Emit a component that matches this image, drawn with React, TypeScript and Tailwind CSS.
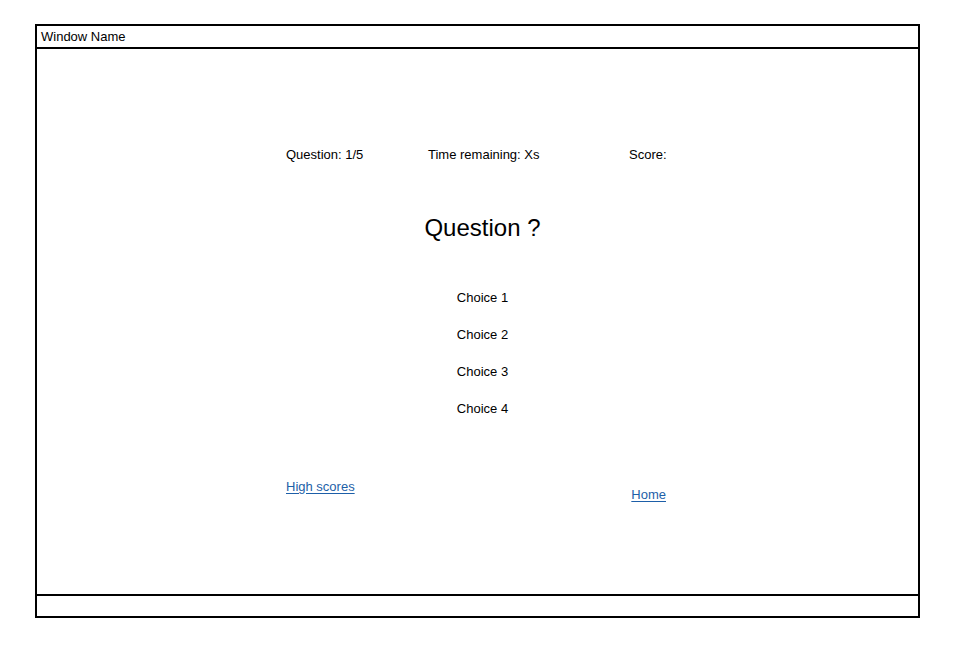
export default function App() {
  const choices = ["Choice 1", "Choice 2", "Choice 3", "Choice 4"];

  return (
    <div className="min-h-[665px] w-[964px] bg-white pt-[24px] pl-[35px] font-['Liberation_Sans',Arial,sans-serif] text-black">
      <div className="flex h-[594px] w-[885px] flex-col border-2 border-black">
        {/* title bar */}
        <div className="flex h-[23px] items-center border-b-2 border-black pl-[4px] text-[13px] leading-none">
          Window Name
        </div>

        {/* main */}
        <div className="flex flex-1 flex-col pt-[97px]">
          <div className="ml-[249px] grid h-[16px] grid-cols-[142px_201px_auto] items-center text-[13px] leading-none">
            <span>Question: 1/5</span>
            <span>Time remaining: Xs</span>
            <span>Score:</span>
          </div>

          <h1 className="mt-[52px] ml-[10px] text-center text-[24px] leading-[28px]">
            Question ?
          </h1>

          <ul className="mt-[48px] ml-[10px] flex flex-col gap-[21px] text-center text-[13px] leading-[16px]">
            {choices.map((c) => (
              <li key={c}>{c}</li>
            ))}
          </ul>

          <div className="mt-[62px] ml-[249px] flex w-[380px] items-start justify-between text-[13px] leading-[16px] text-[#1d5fa8]">
            <a href="#" className="underline underline-offset-2">
              High scores
            </a>
            <a href="#" className="mt-[8px] underline underline-offset-2">
              Home
            </a>
          </div>
        </div>

        {/* status bar */}
        <div className="h-[22px] border-t-2 border-black" />
      </div>
    </div>
  );
}
